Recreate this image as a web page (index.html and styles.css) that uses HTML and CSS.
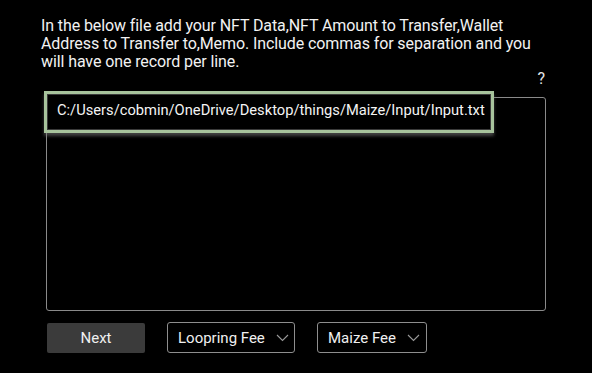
FILE: index.html
```html
<!DOCTYPE html>
<html>
<head>
<meta charset="utf-8">
<link rel="stylesheet" href="styles.css">
</head>
<body>
<div class="page">
  <p class="intro">In the below file add your NFT Data,NFT Amount to Transfer,Wallet Address to Transfer to,Memo. Include commas for separation and you will have one record per line.</p>
  <div class="help-row"><span class="help">?</span></div>
  <div class="field">
    <div class="records"></div>
    <div class="path">C:/Users/cobmin/OneDrive/Desktop/things/Maize/Input/Input.txt</div>
  </div>
  <div class="actions">
    <button class="next">Next</button>
    <div class="select loopring">Loopring Fee <svg class="chev" width="13" height="8" viewBox="0 0 13 8"><path d="M1 1 L6.5 6.5 L12 1" fill="none" stroke="#9a9a9a" stroke-width="1.1"/></svg></div>
    <div class="select maize">Maize Fee <svg class="chev" width="13" height="8" viewBox="0 0 13 8"><path d="M1 1 L6.5 6.5 L12 1" fill="none" stroke="#9a9a9a" stroke-width="1.1"/></svg></div>
  </div>
</div>
</body>
</html>
```
FILE: styles.css
```css
html, body {
  margin: 0;
  padding: 0;
  background: #000;
}
.page {
  width: 592px;
  height: 373px;
  background: #000;
  color: #fff;
  font-family: Roboto, "Open Sans", sans-serif;
  overflow: hidden;
}
.intro {
  margin: 0;
  padding: 17px 44px 0 41px;
  font-size: 16px;
  line-height: 18px;
  letter-spacing: -0.1px;
  color: #f2f2f2;
}
.help-row {
  display: flex;
  justify-content: flex-end;
  padding-right: 47px;
  height: 26px;
}
.help {
  font-size: 16px;
  line-height: 16px;
  color: #e6e6e6;
}
.field {
  position: relative;
  margin-left: 46px;
  width: 500px;
  height: 214px;
}
.records {
  box-sizing: border-box;
  width: 100%;
  height: 100%;
  border: 1px solid #8a8a8a;
  border-radius: 3px;
}
.path {
  position: absolute;
  left: -2px;
  top: -6px;
  box-sizing: border-box;
  width: 450px;
  height: 42px;
  padding-left: 10px;
  background: #000;
  border: 3px solid #a7c39c;
  box-shadow: inset 0 0 0 1px #3a3a3a, 0 3px 3px rgba(120,120,120,0.55);
  font-size: 14.7px;
  line-height: 32px;
  color: #f4f4f4;
  white-space: nowrap;
}
.actions {
  display: flex;
  align-items: center;
  gap: 22px;
  margin-top: 11px;
  margin-left: 47px;
}
.next {
  width: 98px;
  height: 30px;
  border: none;
  border-radius: 2px;
  background: #3b3b3b;
  color: #f0f0f0;
  font-family: Roboto, "Open Sans", sans-serif;
  font-size: 15px;
  padding: 0;
}
.select {
  box-sizing: border-box;
  height: 31px;
  display: flex;
  align-items: center;
  gap: 11px;
  padding-left: 10px;
  border: 1px solid #8e8e8e;
  border-radius: 3px;
  font-size: 15px;
  color: #f0f0f0;
}
.loopring { width: 128px; }
.maize { width: 110px; }
.chev { margin-top: 1px; }
```
